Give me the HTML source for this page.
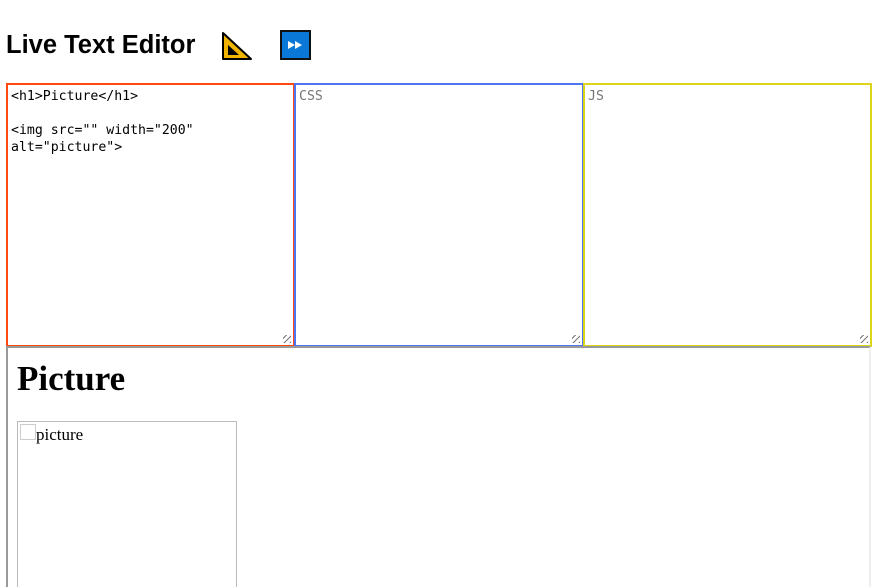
<!DOCTYPE html>
<html style="overflow:hidden;height:587px"><head><style>
body{margin:0;background:#fff;width:876px;height:587px;overflow:hidden;position:relative;font-family:"Liberation Sans",sans-serif}
h1.t{position:absolute;left:6px;top:29px;margin:0;font-size:25.5px;font-weight:bold;line-height:32px}
.ta{position:absolute;top:83px;height:264px;box-sizing:border-box;border:2px solid;font-family:"DejaVu Sans Mono","Liberation Mono",monospace;font-size:13.2px;line-height:17px;padding:3px 3px;white-space:pre;color:#000}
.ta .g{position:absolute;right:2px;bottom:2px;width:8px;height:8px;background:repeating-linear-gradient(135deg,transparent 0 2px,#777 2px 3px,transparent 3px 4px)}
.frame{position:absolute;left:6px;top:346px;width:865px;height:241px;overflow:hidden;box-sizing:border-box;border-top:2px solid #999;border-left:2px solid #999;border-right:2px solid #eee}
</style></head><body>
<h1 class="t">Live Text Editor</h1>
<svg style="position:absolute;left:220px;top:30px" width="34" height="32" viewBox="0 0 34 32">
<polygon points="3,3 31,29 3,29" fill="#f0b400" stroke="#000" stroke-width="2" stroke-linejoin="round"/>
<polygon points="8,15 19,25 8,25" fill="#000"/>
</svg>
<div style="position:absolute;left:280px;top:30px;width:31px;height:30px;box-sizing:border-box;border:2px solid #111;background:#0a78d7"></div>
<svg style="position:absolute;left:284px;top:38px" width="22" height="14" viewBox="0 0 22 14"><polygon points="4,3 11,7 4,11" fill="#fff"/><polygon points="11,3 18,7 11,11" fill="#fff"/></svg>
<div class="ta" style="left:6px;width:289px;border-color:#ff4a0f">&lt;h1&gt;Picture&lt;/h1&gt;

&lt;img src="" width="200"
alt="picture"&gt;<div class="g"></div></div>
<div class="ta" style="left:294px;width:290px;border-color:#4f74ef;color:#777">CSS<div class="g"></div></div>
<div class="ta" style="left:583px;width:289px;border-color:#dcd519;color:#777">JS<div class="g"></div></div>
<div class="frame">
<div style="position:absolute;left:9px;top:10px;font-family:'Liberation Serif',serif;font-weight:bold;font-size:35px;line-height:42px">Picture</div>
<div style="position:absolute;left:9px;top:73px;width:220px;height:166px;box-sizing:border-box;border:1px solid #bbb;border-bottom:none">
<div style="position:absolute;left:2px;top:2px;width:16px;height:16px;box-sizing:border-box;border:1px solid #ccc"></div>
<span style="position:absolute;left:18px;top:3px;font-family:'Liberation Serif',serif;font-size:17px;line-height:19px">picture</span>
</div>
</div>
</body></html>
